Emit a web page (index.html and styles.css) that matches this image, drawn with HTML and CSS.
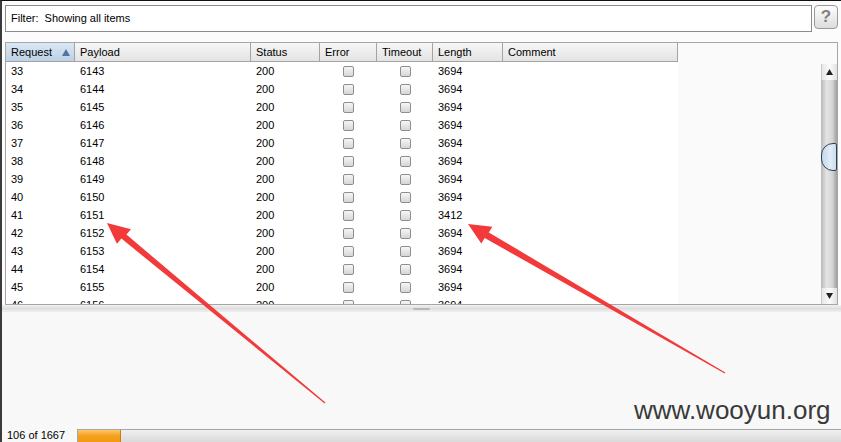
FILE: index.html
```html
<!DOCTYPE html>
<html>
<head>
<meta charset="utf-8">
<link rel="stylesheet" href="styles.css">
</head>
<body>
<div class="app">
  <div class="filter-row">
    <div class="filter-box">Filter:&nbsp; Showing all items</div>
    <div class="help-btn">?</div>
  </div>

  <div class="table-wrap">
    <div class="table-main">
      <div class="thead">
        <div class="th sorted">Request<svg class="sort" width="8" height="7" viewBox="0 0 8 7"><polygon points="4,0 8,7 0,7" fill="#4f74a3"/></svg></div>
        <div class="th">Payload</div>
        <div class="th">Status</div>
        <div class="th">Error</div>
        <div class="th">Timeout</div>
        <div class="th">Length</div>
        <div class="th">Comment</div>
        <div class="th-empty"></div>
      </div>
      <div class="tbody" id="tbody"></div>
    </div>
    <div class="scrollbar">
      <div class="sb-corner"></div>
      <div class="sb-btn"><svg width="7" height="6" viewBox="0 0 7 6"><polygon points="3.5,0 7,6 0,6" fill="#222"/></svg></div>
      <div class="sb-track">
        <div class="sb-pre"></div>
        <div class="sb-thumb"></div>
        <div class="sb-post"></div>
      </div>
      <div class="sb-btn"><svg width="7" height="6" viewBox="0 0 7 6"><polygon points="0,0 7,0 3.5,6" fill="#222"/></svg></div>
    </div>
  </div>

  <div class="splitter"><div class="grip"></div></div>
  <div class="lower-pane"></div>
  <div class="status-row">
    <span class="status-text">106 of 1667</span>
    <div class="progress"><div class="progress-fill"></div></div>
  </div>

  <div class="watermark">www.wooyun.org</div>

  <svg class="arrows" width="841" height="442" viewBox="0 0 841 442">
    <polygon fill="#f23a3a" points="107,223 131.0,229.2 126.4,234.6 325.4,402.6 324.6,403.4 121.4,238.6 116.9,243.8"/>
    <polygon fill="#f23a3a" points="468,224 492.3,226.8 488.8,232.5 725.3,372.6 724.7,373.4 484.7,238.0 481.3,243.5"/>
  </svg>
</div>
<script>
  var rows = [];
  for (var i = 33; i <= 46; i++) {
    var len = i === 41 ? '3412' : '3694';
    rows.push('<div class="tr"><div class="td">' + i + '</div><div class="td">' + (6110 + i) +
      '</div><div class="td">200</div><div class="td cb"><span class="check"></span></div>' +
      '<div class="td cb"><span class="check"></span></div><div class="td">' + len +
      '</div><div class="td"></div><div class="td-empty"></div></div>');
  }
  document.getElementById('tbody').innerHTML = rows.join('');
</script>
</body>
</html>
```
FILE: styles.css
```css
* { box-sizing: border-box; }
html, body { margin: 0; padding: 0; }
body {
  width: 841px;
  height: 442px;
  overflow: hidden;
  font-family: "Liberation Sans", Arial, sans-serif;
  font-size: 11px;
  color: #000;
  background: #fff;
}
.app {
  position: relative;
  width: 841px;
  height: 442px;
  border-top: 1px solid #111;
  border-left: 2px solid #3a3a3a;
  display: flex;
  flex-direction: column;
  background: #fcfcfc;
}
.filter-row {
  display: flex;
  padding: 4px 3px 0 3px;
  height: 31px;
  flex: none;
}
.filter-box {
  flex: 1;
  height: 27px;
  border: 1px solid #8c8c8c;
  background: #fff;
  line-height: 25px;
  padding-left: 5px;
}
.help-btn {
  width: 24px;
  height: 24px;
  margin-left: 2px;
  border: 1px solid #9a9a9a;
  border-radius: 4px;
  background: linear-gradient(#fdfdfd, #dcdcdc);
  color: #808080;
  font-weight: bold;
  font-size: 17px;
  text-align: center;
  line-height: 22px;
}
.table-wrap {
  margin: 10px 3px 0 3px;
  height: 263px;
  flex: none;
  border: 1px solid #a6a6a6;
  display: flex;
  background: #fafafa;
}
.table-main {
  flex: 1;
  display: flex;
  flex-direction: column;
  overflow: hidden;
}
.thead, .tr {
  display: grid;
  grid-template-columns: 69px 176px 69px 57px 56px 70px 175px 1fr;
}
.thead { height: 19px; flex: none; }
.th {
  height: 19px;
  border-right: 1px solid #a3a3a3;
  border-bottom: 1px solid #a3a3a3;
  background: linear-gradient(#f7f7f7, #e3e3e3);
  padding-left: 5px;
  display: flex;
  align-items: center;
}
.th.sorted {
  background: linear-gradient(#dbe7f3, #bcd1e6);
  justify-content: space-between;
  padding-right: 4px;
}
.sort { margin-top: 1px; }
.th-empty { background: #fafafa; }
.tbody { flex: 1; overflow: hidden; }
.tr { height: 18px; }
.td {
  background: #fff;
  padding-left: 5px;
  line-height: 18px;
  white-space: nowrap;
}
.td.cb {
  padding-left: 0;
  display: flex;
  align-items: center;
  justify-content: center;
}
.td-empty { background: #fafafa; }
.check {
  width: 11px;
  height: 11px;
  border: 1px solid #8e8e8e;
  border-radius: 2px;
  background: linear-gradient(#f6f6f6, #d6d6d6);
}
.scrollbar {
  width: 16px;
  flex: none;
  display: flex;
  flex-direction: column;
  background: #fafafa;
}
.sb-corner { height: 21px; flex: none; }
.sb-btn {
  height: 16px;
  flex: none;
  display: flex;
  align-items: center;
  justify-content: center;
  background: linear-gradient(90deg, #e6e6e6, #fbfbfb 50%, #e2e2e2);
  border-left: 1px solid #c9c9c9;
}
.sb-track {
  flex: 1;
  display: flex;
  flex-direction: column;
  background: linear-gradient(90deg, #b9b9b9, #e4e4e4 35%, #d6d6d6 70%, #9e9e9e);
}
.sb-pre { height: 63px; flex: none; }
.sb-thumb {
  height: 28px;
  flex: none;
  border: 1px solid #2f4050;
  border-radius: 12px 2px 2px 12px;
  background: linear-gradient(90deg, #c3d7ec, #e2edf8 60%, #c8dbee);
}
.sb-post { flex: 1; }
.splitter {
  height: 7px;
  flex: none;
  background: linear-gradient(#f2f2f2, #dedede 50%, #f0f0f0);
  display: flex;
  justify-content: center;
  align-items: center;
}
.grip {
  width: 17px;
  height: 2px;
  background: #b8b8b8;
  border-radius: 1px;
}
.lower-pane {
  flex: 1;
  background: #f8f8f8;
}
.status-row {
  height: 13px;
  flex: none;
  display: flex;
  align-items: flex-end;
  background: #f8f8f8;
}
.status-text {
  padding-left: 5px;
  width: 75px;
  line-height: 13px;
  flex: none;
}
.progress {
  flex: 1;
  height: 13px;
  border: 1px solid #a7a7a7;
  border-right: none;
  border-bottom: none;
  background: linear-gradient(#f0f0f0, #dadada);
  display: flex;
}
.progress-fill {
  width: 43px;
  height: 12px;
  background: linear-gradient(#fbc86a, #f5a01e 50%, #f19a12);
  border-right: 1px solid #c97f10;
}
.watermark {
  position: absolute;
  left: 632px;
  top: 394px;
  font-size: 26px;
  line-height: 30px;
  color: #3a3a3a;
  font-family: "Liberation Sans", Arial, sans-serif;
}
.arrows {
  position: absolute;
  left: -2px;
  top: -1px;
  pointer-events: none;
}
```
